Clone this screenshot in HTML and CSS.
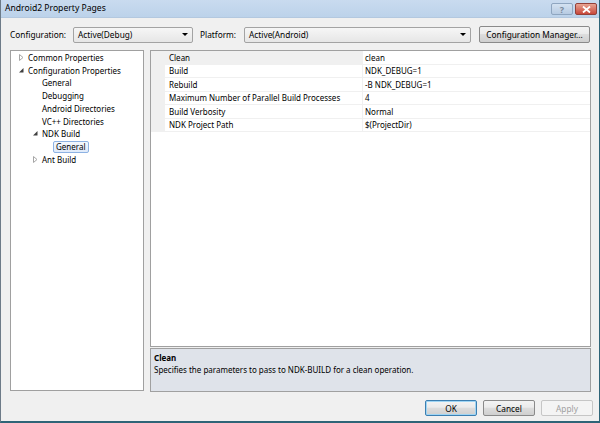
FILE: index.html
```html
<!DOCTYPE html>
<html>
<head>
<meta charset="utf-8">
<link rel="stylesheet" href="styles.css">
</head>
<body>
<div class="window">
  <div class="titlebar">
    <span class="title">Android2 Property Pages</span>
    <div class="caption-btns">
      <div class="cbtn help">?</div>
      <div class="cbtn close">
        <svg width="9" height="7" viewBox="0 0 9 7"><path d="M1 0.5 L8 6.5 M8 0.5 L1 6.5" stroke="#fff" stroke-width="1.8"/></svg>
      </div>
    </div>
  </div>
  <div class="body">
    <div class="config-row">
      <span class="lbl">Configuration:</span>
      <div class="combo combo-config"><span>Active(Debug)</span><i class="arrow"></i></div>
      <span class="lbl lbl-platform">Platform:</span>
      <div class="combo combo-platform"><span>Active(Android)</span><i class="arrow"></i></div>
      <div class="btn btn-cm">Configuration Manager...</div>
    </div>
    <div class="main">
      <div class="tree">
        <div class="node l0"><svg class="tw" width="5" height="7" viewBox="0 0 5 7"><path d="M0.5 0.5 L4 3.5 L0.5 6.5 Z" fill="#fff" stroke="#a6a6a6"/></svg><span>Common Properties</span></div>
        <div class="node l0"><svg class="tw" width="5" height="7" viewBox="0 0 5 7"><path d="M4.5 1 L4.5 5.5 L0 5.5 Z" fill="#404040"/></svg><span>Configuration Properties</span></div>
        <div class="node l1"><span>General</span></div>
        <div class="node l1"><span>Debugging</span></div>
        <div class="node l1"><span>Android Directories</span></div>
        <div class="node l1"><span>VC++ Directories</span></div>
        <div class="node l1 has-tw"><svg class="tw" width="5" height="7" viewBox="0 0 5 7"><path d="M4.5 1 L4.5 5.5 L0 5.5 Z" fill="#404040"/></svg><span>NDK Build</span></div>
        <div class="node l2"><span class="sel">General</span></div>
        <div class="node l1 has-tw"><svg class="tw" width="5" height="7" viewBox="0 0 5 7"><path d="M0.5 0.5 L4 3.5 L0.5 6.5 Z" fill="#fff" stroke="#a6a6a6"/></svg><span>Ant Build</span></div>
      </div>
      <div class="right">
        <div class="grid">
          <div class="row selected"><div class="gut"></div><div class="name">Clean</div><div class="val">clean</div></div>
          <div class="row"><div class="gut"></div><div class="name">Build</div><div class="val">NDK_DEBUG=1</div></div>
          <div class="row"><div class="gut"></div><div class="name">Rebuild</div><div class="val">-B NDK_DEBUG=1</div></div>
          <div class="row"><div class="gut"></div><div class="name">Maximum Number of Parallel Build Processes</div><div class="val">4</div></div>
          <div class="row"><div class="gut"></div><div class="name">Build Verbosity</div><div class="val">Normal</div></div>
          <div class="row"><div class="gut"></div><div class="name">NDK Project Path</div><div class="val">$(ProjectDir)</div></div>
        </div>
        <div class="desc">
          <div class="desc-title">Clean</div>
          <div class="desc-text">Specifies the parameters to pass to NDK-BUILD for a clean operation.</div>
        </div>
      </div>
    </div>
    <div class="buttons">
      <div class="btn btn-ok">OK</div>
      <div class="btn">Cancel</div>
      <div class="btn disabled">Apply</div>
    </div>
  </div>
</div>
</body>
</html>
```

FILE: styles.css
```css
html, body {
  margin: 0;
  padding: 0;
}
body {
  width: 600px;
  height: 423px;
  overflow: hidden;
  font-family: "Noto Sans", "Open Sans", sans-serif;
  font-size: 8px;
  color: #000;
}
.window {
  width: 600px;
  height: 423px;
  box-sizing: border-box;
  display: flex;
  flex-direction: column;
  background: #f0f0f0;
  border-left: 1px solid #6d7b88;
  border-right: 1px solid #2e6477;
  border-bottom: 2px solid #2e6477;
}
.titlebar {
  height: 17px;
  flex: none;
  display: flex;
  align-items: flex-start;
  justify-content: space-between;
  background: linear-gradient(#c9dbef, #bcd2ea);
  border-bottom: 1px solid #b3c8df;
  padding-left: 4px;
}
.title {
  font-size: 8.6px;
  line-height: 17px;
}
.caption-btns {
  display: flex;
  gap: 2px;
  margin-top: 3px;
  margin-right: 2px;
}
.cbtn {
  width: 22px;
  height: 12px;
  box-sizing: border-box;
  border-radius: 2px;
  display: flex;
  align-items: center;
  justify-content: center;
}
.help {
  background: linear-gradient(#d4e2f1, #b7cbe2);
  border: 1px solid #8fa6c0;
  color: #7a8a9c;
  font-weight: bold;
  font-size: 9px;
}
.close {
  background: linear-gradient(#e8a493, #c8473a);
  border: 1px solid #93413a;
}
.body {
  flex: 1;
  display: flex;
  flex-direction: column;
  padding: 8px 0 0 9px;
}
.config-row {
  display: flex;
  align-items: center;
  height: 17px;
  font-size: 8.3px;
}
.lbl {
  width: 63px;
}
.lbl-platform {
  width: 44px;
  margin-left: 7px;
}
.combo {
  height: 16px;
  box-sizing: border-box;
  border: 1px solid #a3a3a3;
  border-radius: 2px;
  background: linear-gradient(#f6f6f6, #e6e6e6);
  display: flex;
  align-items: center;
  justify-content: space-between;
  padding: 0 3px 0 4px;
}
.combo-config {
  width: 120px;
}
.combo-platform {
  width: 227px;
}
.arrow {
  width: 0;
  height: 0;
  border-left: 3px solid transparent;
  border-right: 3px solid transparent;
  border-top: 3px solid #000;
  margin-right: 1px;
}
.btn {
  box-sizing: border-box;
  height: 16px;
  width: 52px;
  border: 1px solid #8a8a8a;
  border-radius: 2px;
  background: linear-gradient(#f3f3f3 0%, #ebebeb 45%, #dddddd 50%, #cfcfcf 100%);
  display: flex;
  align-items: center;
  justify-content: center;
}
.btn-cm {
  width: 111px;
  height: 17px;
  margin-left: 8px;
}
.main {
  display: flex;
  gap: 6px;
  margin-top: 7px;
  height: 342px;
}
.tree {
  width: 134px;
  height: 341px;
  box-sizing: border-box;
  border: 1px solid #a0a0a0;
  background: #fff;
  padding-top: 0;
}
.node {
  height: 12.75px;
  display: flex;
  align-items: center;
  white-space: nowrap;
}
.node.l0 { padding-left: 8px; }
.node.l1 { padding-left: 31px; }
.node.l1.has-tw { padding-left: 22px; }
.node.l2 { padding-left: 42px; }
.tw {
  width: 5px;
  margin-right: 4px;
  flex: none;
}
.sel {
  border: 1px solid #8db2e3;
  border-radius: 2px;
  background: linear-gradient(#f4f8fd, #dfeafa);
  padding: 0 2px;
  line-height: 10px;
}
.right {
  width: 441px;
  display: flex;
  flex-direction: column;
  gap: 1px;
}
.grid {
  height: 297px;
  box-sizing: border-box;
  border: 1px solid #a0a0a0;
  background: #fff;
}
.row {
  display: flex;
  height: 13.5px;
  box-sizing: border-box;
  border-bottom: 1px solid #f0f0f0;
}
.gut {
  width: 14px;
  background: #f0f0f0;
  flex: none;
}
.name {
  width: 198px;
  box-sizing: border-box;
  padding-left: 4px;
  border-right: 1px solid #f0f0f0;
  display: flex;
  align-items: center;
  white-space: nowrap;
}
.val {
  flex: 1;
  padding-left: 2px;
  display: flex;
  align-items: center;
}
.row.selected .name {
  background: #f0f0f0;
}
.desc {
  flex: 1;
  border: 1px solid #a0a0a0;
  background: #dfe3ea;
  padding: 3px 3px;
}
.desc-title {
  font-weight: bold;
  line-height: 12px;
}
.desc-text {
  line-height: 12px;
}
.buttons {
  display: flex;
  justify-content: flex-end;
  gap: 6px;
  margin-top: 8px;
  padding-right: 6px;
  font-size: 8.3px;
}
.btn-ok {
  border-color: #3c7fb1;
  box-shadow: inset 0 0 0 1px #9fd5f4;
}
.disabled {
  color: #a0a0a0;
  border-color: #c6c6c6;
  background: #f4f4f4;
}
```
